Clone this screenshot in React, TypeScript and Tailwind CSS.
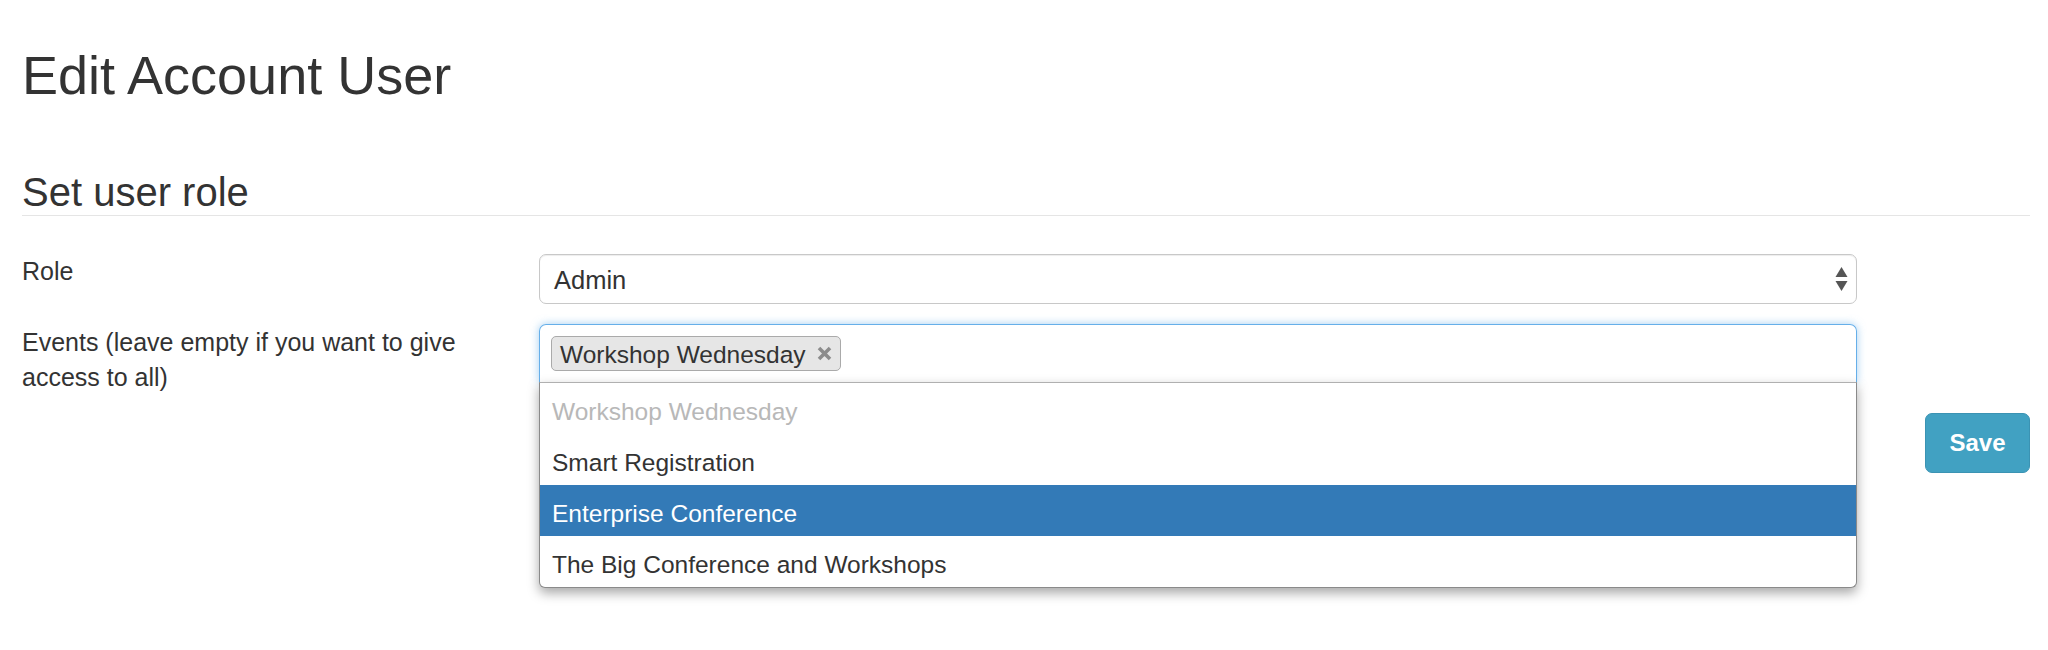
import React from 'react';

const options = [
  { label: 'Workshop Wednesday', state: 'disabled' },
  { label: 'Smart Registration', state: 'normal' },
  { label: 'Enterprise Conference', state: 'active' },
  { label: 'The Big Conference and Workshops', state: 'normal' },
];

export default function App() {
  return (
    <div className="min-h-screen bg-white text-[#333] font-['Liberation_Sans',Arial,sans-serif] pl-[22px] pr-[18px] pt-[46px]">
      <h1 className="text-[54px] leading-[1.1] font-normal">Edit Account User</h1>

      <h3 className="mt-[65px] text-[40px] leading-[1.1] font-normal pb-[1px] border-b border-[#e5e5e5]">
        Set user role
      </h3>

      <form className="mt-[38px]">
        {/* Role */}
        <div className="flex">
          <label className="w-[517px] pr-[70px] text-[25px] leading-[35px]">Role</label>
          <div className="w-[1318px] h-[50px] border border-[#c8c8c8] rounded-[7px] shadow-[inset_0_1px_1px_rgba(0,0,0,0.075)] flex items-center justify-between pl-[14px] pr-[8px] text-[25.5px]">
            <span className="pt-[2px]">Admin</span>
            <svg width="13" height="26" viewBox="0 0 13 26" className="text-[#555]">
              <path d="M6.5 1 L12.5 11 L0.5 11 Z" fill="currentColor" />
              <path d="M0.5 15 L12.5 15 L6.5 25 Z" fill="currentColor" />
            </svg>
          </div>
        </div>

        {/* Events */}
        <div className="flex mt-[20px]">
          <label className="w-[517px] pt-[1px] pr-[70px] text-[25px] leading-[35px]">
            Events (leave empty if you want to give access to all)
          </label>
          <div className="relative w-[1318px]">
            <div className="h-[58px] border border-b-0 border-[#66afe9] rounded-t-[7px] shadow-[0_0_9px_rgba(102,175,233,0.6)] pl-[11px] pt-[11px]">
              <span className="inline-flex items-center h-[35px] bg-[#e6e6e6] border border-[#aaa] rounded-[5px] pl-[8px] pr-[8px] text-[24.5px] leading-none">
                <span className="pt-[2px]">Workshop Wednesday</span>
                <svg width="15" height="15" viewBox="0 0 15 15" className="ml-[11px] text-[#8c8c8c]">
                  <path d="M2 2 L13 13 M13 2 L2 13" stroke="currentColor" strokeWidth="3.6" />
                </svg>
              </span>
            </div>

            {/* dropdown */}
            <ul className="absolute left-0 top-[58px] w-full z-10 bg-white border border-[#8a8a8a] border-t-[#b0b0b0] rounded-b-[6px] shadow-[0_5px_12px_rgba(0,0,0,0.35)] overflow-hidden">
              {options.map((o) => (
                <li
                  key={o.label}
                  className={
                    'h-[51px] flex items-center pl-[12px] pt-[6px] text-[24.5px] ' +
                    (o.state === 'disabled'
                      ? 'text-[#b8b8b8]'
                      : o.state === 'active'
                        ? 'bg-[#337ab7] text-white'
                        : 'text-[#333]')
                  }
                >
                  {o.label}
                </li>
              ))}
            </ul>
          </div>
        </div>

        {/* Save */}
        <div className="flex justify-end mt-[18px]">
          <button
            type="button"
            className="w-[105px] h-[60px] rounded-[7px] bg-[#41a1c2] border border-[#3b93b3] text-white text-[24px] font-bold"
          >
            Save
          </button>
        </div>
      </form>
    </div>
  );
}
